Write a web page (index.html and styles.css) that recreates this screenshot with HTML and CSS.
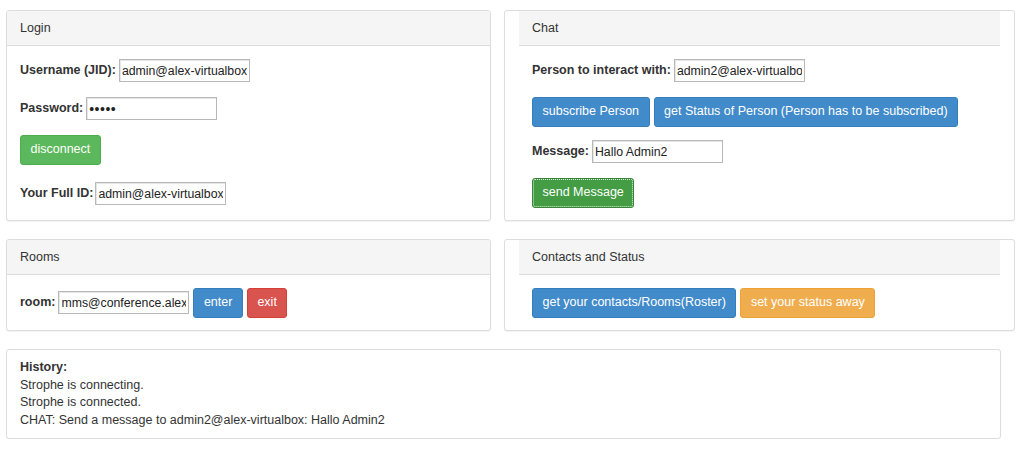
FILE: index.html
```html
<!DOCTYPE html>
<html>
<head>
<meta charset="utf-8">
<link rel="stylesheet" href="styles.css">
</head>
<body>
<div class="page">
  <div class="grid">
    <div class="panel">
      <div class="panel-heading">Login</div>
      <div class="panel-body">
        <div class="row"><label>Username (JID):</label><input type="text" value="admin@alex-virtualbox"></div>
        <div class="row"><label>Password:</label><input class="pw" type="password" value="admin"></div>
        <div class="row btn-row wide"><button class="btn btn-success">disconnect</button></div>
        <div class="row last"><label class="tight">Your Full ID:</label><input type="text" value="admin@alex-virtualbox/"></div>
      </div>
    </div>
    <div class="panel">
      <div class="panel-heading inset">Chat</div>
      <div class="panel-body inset">
        <div class="row"><label>Person to interact with:</label><input type="text" value="admin2@alex-virtualbox"></div>
        <div class="row btn-row"><button class="btn btn-primary">subscribe Person</button><button class="btn btn-primary">get Status of Person (Person has to be subscribed)</button></div>
        <div class="row"><label>Message:</label><input type="text" value="Hallo Admin2"></div>
        <div class="row btn-row last"><button class="btn btn-success focus">send Message</button></div>
      </div>
    </div>
    <div class="panel">
      <div class="panel-heading">Rooms</div>
      <div class="panel-body">
        <div class="row btn-row last"><label>room:</label><input type="text" value="mms@conference.alex"><button class="btn btn-primary">enter</button><button class="btn btn-danger">exit</button></div>
      </div>
    </div>
    <div class="panel">
      <div class="panel-heading inset">Contacts and Status</div>
      <div class="panel-body inset">
        <div class="row btn-row last"><button class="btn btn-primary">get your contacts/Rooms(Roster)</button><button class="btn btn-warning">set your status away</button></div>
      </div>
    </div>
  </div>
  <div class="panel history">
    <div class="panel-body hist-body">
      <b>History:</b>
      <div>Strophe is connecting.</div>
      <div>Strophe is connected.</div>
      <div>CHAT: Send a message to admin2@alex-virtualbox: Hallo Admin2</div>
    </div>
  </div>
</div>
</body>
</html>
```

FILE: styles.css
```css
html, body {
  margin: 0;
  padding: 0;
  background: #fff;
}
body {
  font-family: "Liberation Sans", Arial, sans-serif;
  font-size: 12.5px;
  line-height: 17.5px;
  color: #333;
}
.page {
  padding: 10px 0 0 6px;
  width: 1009px;
}
.grid {
  display: grid;
  grid-template-columns: 485px 511px;
  column-gap: 13px;
  row-gap: 18px;
}
.panel {
  background: #fff;
  border: 1px solid #ddd;
  border-radius: 3px;
  box-shadow: 0 1px 1px rgba(0,0,0,0.05);
}
.panel-heading {
  background: #f5f5f5;
  border-bottom: 1px solid #ddd;
  padding: 8px 13px;
  line-height: 18px;
  border-radius: 3px 3px 0 0;
}
.panel-heading.inset {
  margin: 0 14px;
  border-radius: 0;
}
.panel-body {
  padding: 13px;
}
.panel-body.inset {
  padding: 13px 27px;
}
.row {
  margin-bottom: 15px;
  display: flex;
  align-items: center;
  height: 23px;
}
.row.btn-row {
  height: 29px;
  margin-bottom: 14px;
}
.row.btn-row.wide {
  margin-bottom: 18px;
}
.row.last {
  margin-bottom: 0;
}
label {
  font-weight: bold;
  margin-right: 3px;
}
label.tight {
  margin-right: 2px;
}
input {
  font-family: "Liberation Sans", Arial, sans-serif;
  font-size: 12.3px;
  color: #222;
  height: 23px;
  box-sizing: border-box;
  padding: 1px 2px;
  border: 1px solid #b8b8b8;
  box-shadow: inset 1px 1px 0 #e6e6e6;
  margin: 0 4px 0 0;
  width: 131px;
  outline: none;
}
input.pw {
  font-size: 14px;
  letter-spacing: 0.5px;
}
.btn {
  font-family: "Liberation Sans", Arial, sans-serif;
  font-size: 12.5px;
  line-height: 17.5px;
  color: #fff;
  border: 1px solid transparent;
  border-radius: 3px;
  padding: 5px 9.5px;
  height: 30px;
  box-sizing: border-box;
  margin: 0 4px 0 0;
  cursor: pointer;
}
.btn-success { background: #5cb85c; border-color: #4cae4c; }
.btn-success.focus { background: #449d44; border-color: #398439; outline: 1px dotted #d9f0d9; outline-offset: -2px; }
.btn-primary { background: #428bca; border-color: #357ebd; }
.btn-danger { background: #d9534f; border-color: #d43f3a; }
.btn-warning { background: #f0ad4e; border-color: #eea236; }
.history {
  margin-top: 18px;
  width: 993px;
}
.hist-body {
  padding: 9px 13px 9px 13px;
}
.hist-body b {
  display: block;
}
```
